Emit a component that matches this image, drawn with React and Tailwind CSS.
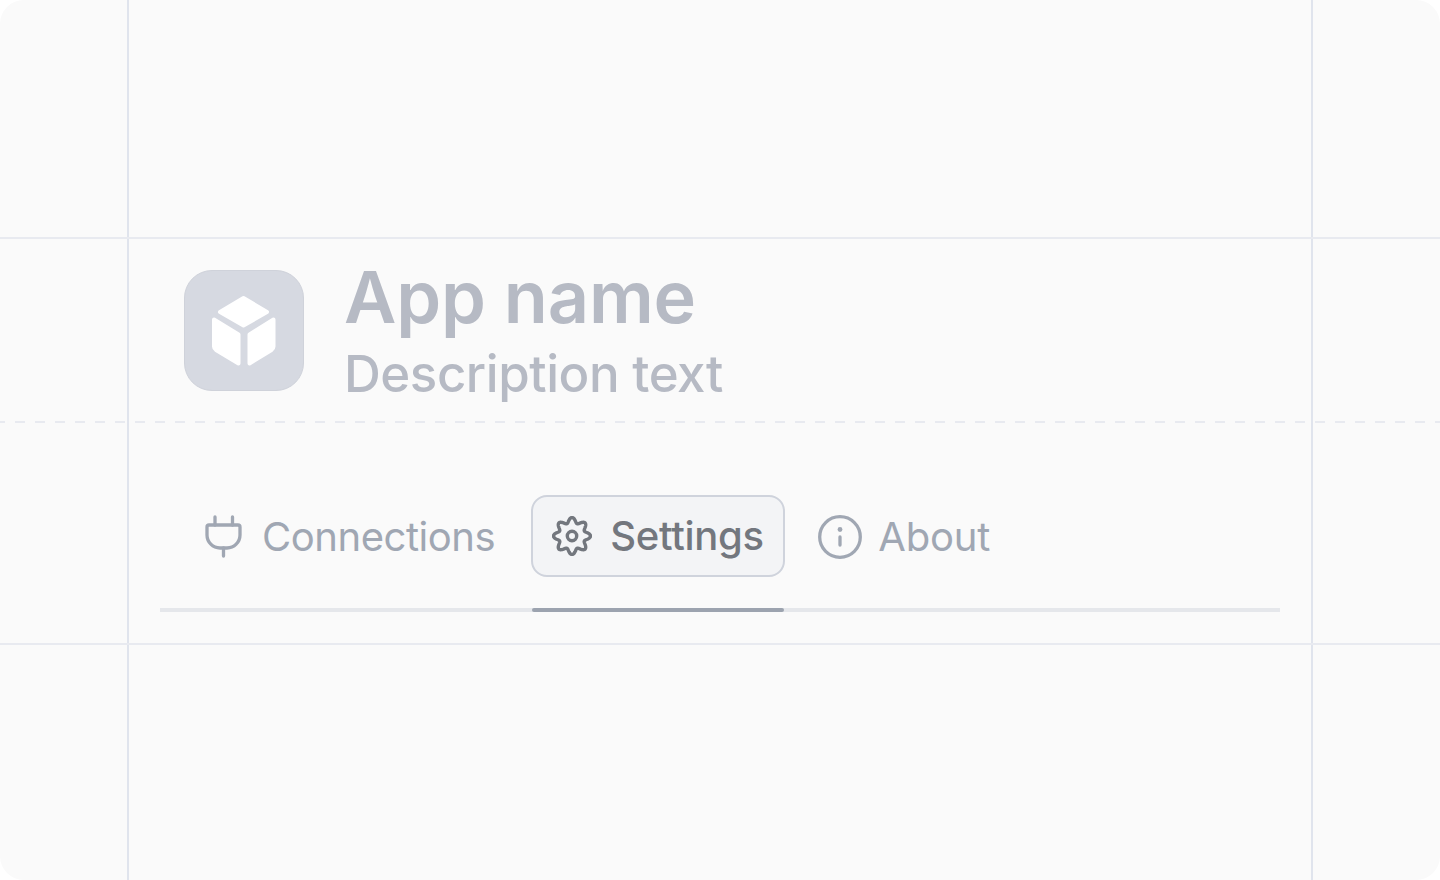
import React from "react";

const gearPath = () => {
  const pts = [];
  for (let i = 0; i < 240; i++) {
    const a = (i / 240) * Math.PI * 2;
    const r = 15.9 + 2.6 * Math.cos(8 * a);
    const x = 20 + r * Math.sin(a);
    const y = 20 - r * Math.cos(a);
    pts.push(`${x.toFixed(2)} ${y.toFixed(2)}`);
  }
  return `M${pts.join("L")}Z`;
};

const GearIcon = () => (
  <svg width="40" height="40" viewBox="0 0 40 40" fill="none" stroke="#73777e" strokeWidth="3.400" strokeLinejoin="round">
    <path d={gearPath()} />
    <circle cx="20" cy="20" r="4.700" />
  </svg>
);

const InfoIcon = () => (
  <svg width="44" height="44" viewBox="0 0 44 44" fill="none" stroke="#a0a7b3" strokeWidth="3.300" strokeLinecap="round">
    <circle cx="22" cy="22" r="20.300" />
    <path d="M22 22v8" />
    <circle cx="22" cy="14.500" r="2.400" fill="#a0a7b3" stroke="none" />
  </svg>
);

const PlugIcon = () => (
  <svg width="40" height="44" viewBox="0 0 40 44" fill="none" stroke="#a0a7b3" strokeWidth="3.300" strokeLinecap="round" strokeLinejoin="round">
    <path d="M11 2v8M28.500 2v8" />
    <path d="M5 10h29a2 2 0 0 1 2 2v8a13 13 0 0 1-13 13h-7a13 13 0 0 1-13-13v-8a2 2 0 0 1 2-2z" />
    <path d="M19.500 33v8" />
  </svg>
);

const CubeIcon = () => (
  <svg width="120" height="120" viewBox="0 0 120 120" fill="#ffffff" stroke="#ffffff" strokeWidth="4" strokeLinejoin="round">
    <path d="M59.500 27 83 41 59.500 54.500 36 41z" />
    <path d="M30 48.500 54.500 63.500v29L32 79q-2-1.500-2-3.500z" />
    <path d="M89.500 48.500 65.500 63.500v29L87.500 79q2-1.500 2-3.500z" />
  </svg>
);

const App = () => {
  return (
    <div className="bg-white w-[1440px] h-[880px] overflow-hidden" style={{ fontFamily: "Inter, sans-serif" }}>
      <div className="relative w-full h-full bg-[#fafafa] rounded-3xl overflow-hidden pt-[258px]">
        {/* guide lines */}
        <div className="absolute top-0 bottom-0 left-[127px] w-[2px] bg-[#e0e4ed]" />
        <div className="absolute top-0 bottom-0 left-[1311px] w-[2px] bg-[#e0e4ed]" />
        <div className="absolute left-0 right-0 top-[237px] h-[2px] bg-[#e8eaf0]" />
        <div className="absolute left-0 right-0 top-[643px] h-[2px] bg-[#e8eaf0]" />
        <div className="absolute left-[-5px] right-0 top-[421px] h-[2px] bg-[repeating-linear-gradient(to_right,#e8eaf0_0,#e8eaf0_10px,transparent_10px,transparent_20px)]" />

        {/* header */}
        <div className="flex items-start gap-[40px] pl-[184px]">
          <div className="relative mt-[12px] w-[120px] h-[121px] rounded-[28px] bg-[#d6d9e1] border border-[#cfd2da]">
            <div className="absolute left-[-1px] top-0">
              <CubeIcon />
            </div>
          </div>
          <div className="flex flex-col">
            <div className="text-[72px] leading-[78px] font-semibold text-[#b6bac4] tracking-[-0.15px]">App name</div>
            <div className="mt-[7px] text-[51px] leading-[62px] font-[450] text-[#b6bac4] tracking-[-0.45px]">Description text</div>
          </div>
        </div>

        {/* tabs */}
        <div className="mt-[92px] mx-[160px] border-b-4 border-[#e5e7eb]">
          <div className="flex items-center h-[111px] pb-[31px] text-[40px]">
            <div className="flex items-center gap-[18px] h-20 pl-11 text-[#a0a7b3] font-[430] tracking-[-0.45px]">
              <PlugIcon />
              <span>Connections</span>
            </div>
            <div className="ml-[36px] -mt-[2px] flex items-center gap-[18px] h-[82px] w-[254px] pl-[19px] rounded-2xl bg-[#f3f4f6] border-2 border-[#cfd3dc] text-[#73777e] font-[450] tracking-[-0.3px]">
              <GearIcon />
              <span>Settings</span>
            </div>
            <div className="ml-[33px] flex items-center gap-[16px] h-20 text-[#a0a7b3] font-[430] tracking-[-0.15px]">
              <InfoIcon />
              <span>About</span>
            </div>
          </div>
          <div className="relative h-0">
            <div className="absolute left-[372px] top-0 w-[252px] h-1 rounded-sm bg-[#9ca3af]" />
          </div>
        </div>
      </div>
    </div>
  );
};

export default App;
